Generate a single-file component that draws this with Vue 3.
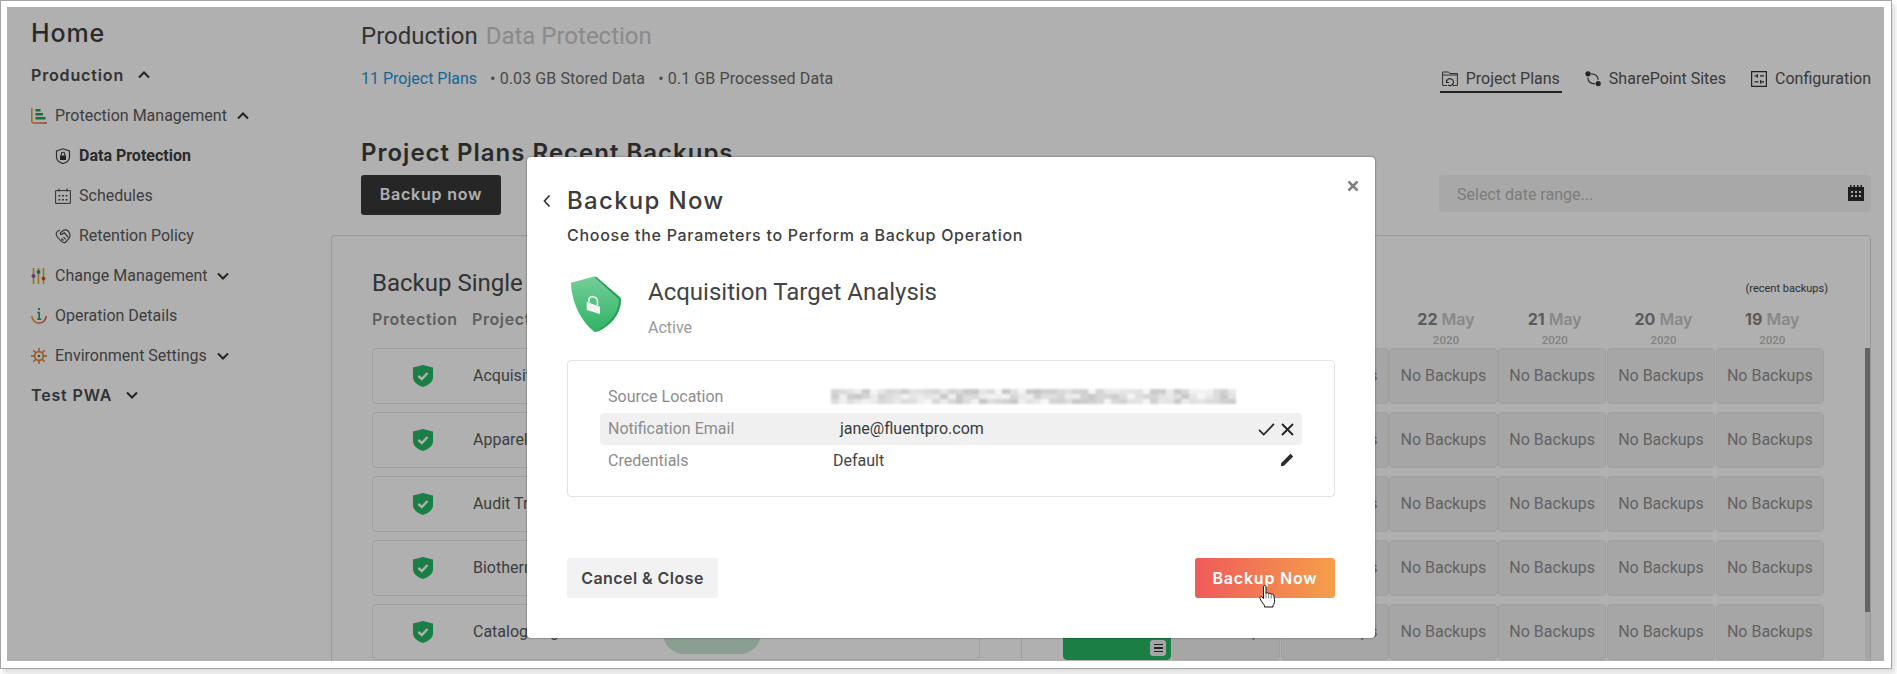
<script setup>
const dates = [['25', '2020'], ['24', '2020'], ['23', '2020'], ['22', '2020'], ['21', '2020'], ['20', '2020'], ['19', '2020']]
const rows = ['Acquisition Target Analysis', 'Apparel Redesign', 'Audit Trail Review', 'Biotherm Rollout', 'Catalog Migration']
const cells = [0, 1, 2, 3, 4, 5, 6]
const pixels = []
let seed = 7
for (let i = 0; i < 156; i++) {
  seed = (seed * 137 + 59) % 251
  const g = 198 + (seed % 50)
  pixels.push(`rgb(${g},${g},${g})`)
}
</script>

<template>
  <div class="shot">
    <div class="frame">
      <div class="stage">
        <aside class="side">
          <div class="home">Home</div>
          <div class="item group">Production
            <svg class="chev first" viewBox="0 0 12 8"><path d="M1 6.500 6 1.500l5 5" /></svg>
          </div>
          <div class="item">
            <svg class="ico" viewBox="0 0 16 16">
              <defs><linearGradient id="ax" x1="0" x2="1" y1="0" y2="0"><stop offset="0" stop-color="#e0a030" /><stop offset="1" stop-color="#e04a3c" /></linearGradient></defs>
              <path d="M.8 0v13q0 2 2 2H16" fill="none" stroke="url(#ax)" stroke-width="1.500" />
              <path d="M4.500 1h5v2.400h-5zM4.500 5h7.500v2.400H4.500zM4.500 9h10v2.400h-10z" fill="#25a05c" />
            </svg>
            <span>Protection Management</span>
            <svg class="chev" viewBox="0 0 12 8"><path d="M1 6.500 6 1.500l5 5" /></svg>
          </div>
          <div class="item sub active">
            <svg class="ico" viewBox="0 0 16 16">
              <path d="M8 .8 14.500 3v6c0 3.400-3 5.600-6.500 6.600C4.500 14.600 1.500 12.400 1.500 9V3z" fill="none" stroke="#444" stroke-width="1.200" />
              <path d="M5 7.500h6V12H5z" fill="#333" />
              <path d="M6.300 7.500V6a1.700 1.700 0 0 1 3.400 0v1.500" fill="none" stroke="#333" stroke-width="1.100" />
            </svg>
            <span>Data Protection</span>
          </div>
          <div class="item sub">
            <svg class="ico" viewBox="0 0 16 16">
              <path d="M.6 2.600h14.800v12.800H.6zM4 .5v3M12 .5v3" fill="none" stroke="#444" stroke-width="1" />
              <path d="M3.500 7h1.800v1.600H3.500zM7.100 7h1.800v1.600H7.100zM10.700 7h1.800v1.600h-1.800zM3.500 11h1.800v1.600H3.500zM7.100 11h1.800v1.600H7.100zM10.700 11h1.800v1.600h-1.800z" fill="#444" />
            </svg>
            <span>Schedules</span>
          </div>
          <div class="item sub">
            <svg class="ico" viewBox="0 0 16 16">
              <path d="M5 2.200C3 2.800 1 4.400 1.200 6.500c.2 1.600 3 4.800 6.300 7.600 1.300 1 2.500.6 3.200-.1l3-3.300c1.300-1.800 1.500-4.300.5-6.300C13 2.200 10.500 1.200 8.500 2.300L5.500 5c-.8 1 .4 2 1.500 1.300l2.400-1.500 3.800 4.600M6.500 10.500l2 2M8.500 9l2.200 2.400" fill="none" stroke="#444" stroke-width="1.100" />
            </svg>
            <span>Retention Policy</span>
          </div>
          <div class="item">
            <svg class="ico" viewBox="0 0 16 16">
              <path d="M2.500 0v16M7.500 0v16M12.500 0v16" stroke="#d8a72e" stroke-width="1.600" />
              <circle cx="2.500" cy="8" r="2" fill="#9a4dc4" /><circle cx="7.500" cy="4" r="2" fill="#25a05c" /><circle cx="12.500" cy="10.500" r="2" fill="#e04a3c" />
            </svg>
            <span>Change Management</span>
            <svg class="chev" viewBox="0 0 12 8"><path d="M1 1.500l5 5 5-5" /></svg>
          </div>
          <div class="item">
            <svg class="ico" viewBox="0 0 16 16">
              <defs><linearGradient id="ar" x1="0" x2="1" y1="0" y2="0"><stop offset="0" stop-color="#e0a030" /><stop offset="1" stop-color="#e04a3c" /></linearGradient></defs>
              <path d="M.8 8a7.200 7.200 0 0 0 14.400 0" fill="none" stroke="url(#ar)" stroke-width="1.500" />
              <path d="M7 0h2v2H7zM6.300 3.800H9v6.800h1.300V12H6.300v-1.400h1V5.200h-1z" fill="#25a05c" />
            </svg>
            <span>Operation Details</span>
          </div>
          <div class="item">
            <svg class="ico" viewBox="0 0 16 16">
              <circle cx="8" cy="8" r="4.300" fill="none" stroke="#e08a30" stroke-width="1.800" />
              <circle cx="8" cy="8" r="1.300" fill="#2a8f5a" />
              <path d="M8 0v3M8 13v3M0 8h3M13 8h3M2.300 2.300l2.200 2.200M11.500 11.500l2.200 2.200M13.700 2.300l-2.200 2.200M4.500 11.500l-2.200 2.200" stroke="#e0702c" stroke-width="1.400" />
            </svg>
            <span>Environment Settings</span>
            <svg class="chev" viewBox="0 0 12 8"><path d="M1 1.500l5 5 5-5" /></svg>
          </div>
          <div class="item group">Test PWA
            <svg class="chev first" viewBox="0 0 12 8"><path d="M1 1.500l5 5 5-5" /></svg>
          </div>
        </aside>

        <main class="main">
          <div class="head">
            <h1 class="crumb">Production <span>Data Protection</span></h1>
            <div class="stats">
              <a class="link">11 Project Plans</a>
              <span class="stat">• 0.03 GB Stored Data</span>
              <span class="stat">• 0.1 GB Processed Data</span>
              <nav class="tabs">
                <div class="tab on">
                  <svg class="ico" viewBox="0 0 16 16">
                    <path d="M.6 14.500V1h6l1.200 1.500h7.600v12H11M5 14.500H.6M.6 4h14.800" fill="none" stroke="#444" stroke-width="1" />
                    <path d="M4.500 11a3.500 3.500 0 1 1 1.500 3M4.500 8.800V11.500H7" fill="none" stroke="#333" stroke-width="1.100" />
                  </svg>
                  <span>Project Plans</span>
                </div>
                <div class="tab">
                  <svg class="ico" viewBox="0 0 16 16">
                    <circle cx="3" cy="2.800" r="2.600" fill="#333" /><circle cx="13.200" cy="12.600" r="2.600" fill="#333" />
                    <path d="M6 2.800c4.500 0 7 1.700 7.200 6M2.800 6.500c.2 4 3 6.300 7.200 6.300" fill="none" stroke="#444" stroke-width="1.200" />
                  </svg>
                  <span>SharePoint Sites</span>
                </div>
                <div class="tab">
                  <svg class="ico" viewBox="0 0 16 16">
                    <path d="M.6.6h14.800v14.800H.6z" fill="none" stroke="#333" stroke-width="1.200" />
                    <path d="M3.500 4.800h2M9 4.800h4M3.500 10.800h4M10.500 10.800h2.500" stroke="#333" stroke-width="1.200" />
                    <path d="M5.500 3.200h1.500v3.200H5.500zM9 9.200h1.500v3.200H9z" fill="#333" />
                  </svg>
                  <span>Configuration</span>
                </div>
              </nav>
            </div>
            <h2 class="section">Project Plans Recent Backups</h2>
            <div class="toolbar">
              <button class="now">Backup now</button>
              <div class="range">
                <span class="ph">Select date range...</span>
                <svg class="cal" viewBox="0 0 16 16">
                  <path fill-rule="evenodd" d="M0 2h2V0h1.500v2h2V0H7v2h2V0h1.500v2h2V0H14v2h2v14H0zM3 6v2h2V6zM7 6v2h2V6zM11 6v2h2V6zM3 10v2h2v-2zM7 10v2h2v-2zM11 10v2h2v-2z" fill="#2a2a2a" />
                </svg>
              </div>
            </div>
          </div>

          <section class="card">
            <div class="cardtop">
              <h3>Backup Single Project Plans</h3>
              <small>(recent backups)</small>
            </div>
            <div class="cols">
              <div class="hleft"><b class="hprot">Protection</b><b>Project Plan</b></div>
              <div class="hdates">
                <div v-for="d in dates" :key="d[0]" class="hdate">
                  <div class="dm"><b>{{ d[0] }}</b> May</div>
                  <div class="yr">{{ d[1] }}</div>
                </div>
              </div>
            </div>
            <div class="tbody">
              <div class="rows">
                <div v-for="name in rows" :key="name" class="row">
                  <div class="rowcard">
                    <svg class="rshield" viewBox="0 0 20 22">
                      <path d="M10 0 20 2.500V12c0 5-4.500 8.200-10 10C4.500 20.200 0 17 0 12V2.500z" fill="#28b865" />
                      <path d="M5.500 11 8.800 14l5.700-6" fill="none" stroke="#fff" stroke-width="2.400" />
                    </svg>
                    <span class="rname">{{ name }}</span>
                    <span class="pill"></span>
                  </div>
                  <div class="divider"></div>
                  <div class="rcells">
                    <div v-for="c in cells" :key="c" class="cell" :class="{ ok: c === 0 && name === rows[4] }">
                      <template v-if="c === 0 && name === rows[4]">
                        <span class="menu"><i></i><i></i><i></i></span>
                      </template>
                      <span v-else class="ctext">No Backups</span>
                    </div>
                  </div>
                </div>
              </div>
              <div class="scroll"><div class="thumb"></div></div>
            </div>
          </section>
        </main>

        <div class="overlay">
          <div class="modal">
            <header class="mhead">
              <svg class="back" viewBox="0 0 8 14"><path d="M6.500 1.500 1.500 7l5 5.500" /></svg>
              <h2>Backup Now</h2>
              <svg class="close" viewBox="0 0 12 12"><path d="M1.500 1.500l9 9M10.500 1.500l-9 9" /></svg>
            </header>
            <p class="msub">Choose the Parameters to Perform a Backup Operation</p>
            <div class="plan">
              <svg class="bigshield" viewBox="0 0 51 56">
                <defs><linearGradient id="sg" x1="0" x2="0" y1="0" y2="1"><stop offset="0" stop-color="#74cf98" /><stop offset="1" stop-color="#2fb264" /></linearGradient></defs>
                <path d="M1 8Q0 7 2 6.500L24 .5Q25.500 0 27 1.500L50 21Q51 22 51 24C51 40 38 52 26 56Q25 56.500 24 55.500C12 46 2 28 1 8Z" fill="url(#sg)" />
                <path d="M26 .8 50 21.500Q50.800 22.500 50.800 24C50.800 38 40 50 27 55.500C38 48 48.500 38 49 25Q49 23.500 48 22.500L25 1.500Z" fill="#279c58" />
                <path d="M16.700 25.700 30 30.700V38L16.700 34Z" fill="#f4f4f4" />
                <path d="M19 26.500V23.500C19 19 27.500 20 27.500 25.500V29.500" fill="none" stroke="#f4f4f4" stroke-width="1.600" />
              </svg>
              <div class="plantext">
                <div class="pname">Acquisition Target Analysis</div>
                <div class="pstate">Active</div>
              </div>
            </div>
            <div class="params">
              <div class="param">
                <span class="plabel">Source Location</span>
                <div class="blur"><i v-for="(p, i) in pixels" :key="i" :style="{ background: p }"></i></div>
              </div>
              <div class="param edit">
                <span class="plabel">Notification Email</span>
                <span class="pval mail">jane@fluentpro.com</span>
                <svg class="act" viewBox="0 0 18 14"><path d="M1 7.500 6 12.500 17 1" /></svg>
                <svg class="act x" viewBox="0 0 13 13"><path d="M1 1l11 11M12 1 1 12" /></svg>
              </div>
              <div class="param">
                <span class="plabel">Credentials</span>
                <span class="pval">Default</span>
                <svg class="pen" viewBox="0 0 14 14"><path d="M10.500.8 13.200 3.500 4 12.700.8 13.200 1.300 10Z" fill="#2d2d2d" /></svg>
              </div>
            </div>
            <footer class="mfoot">
              <button class="cancel">Cancel &amp; Close</button>
              <button class="go">Backup Now</button>
              <svg class="hand" viewBox="0 0 18 23">
                <path d="M4.500 1.500C4.500.2 7 .2 7 1.500V8.500C7.300 7.400 9.500 7.400 9.700 8.800 10 7.900 12 8 12.200 9.400 12.700 8.600 14.500 8.900 14.700 10.300L15.500 14.500C16 17 15 19 14 20.500V22H5.500V20.500C4 18.500 1.500 15 1 13.500.5 12 2 11 3.200 12L4.500 13.500Z" fill="#fff" stroke="#111" stroke-width="1" />
                <path d="M7 9v4.500M9.700 9v4.500M12.200 9.600v4" stroke="#555" stroke-width=".8" fill="none" />
              </svg>
            </footer>
          </div>
        </div>
      </div>
    </div>
  </div>
</template>

<style>
html, body { margin: 0; background: #fff; overflow: hidden; }
</style>

<style scoped>
* { box-sizing: border-box; }
.shot { width: 1897px; height: 674px; background: #fff; font-family: Roboto, sans-serif; font-size: 16px; color: #5a5a5a; overflow: hidden; }
.frame { width: 1892px; height: 669px; border: 1px solid #a4a4a4; padding: 6px 7px 6px 6px; background: #fff; box-shadow: 3px 4px 5px rgba(0,0,0,.14); }
.stage { position: relative; width: 1877px; height: 654px; display: flex; overflow: hidden; background: #fff; }
.side { width: 324px; flex: none; padding-left: 24px; }
.home { height: 49px; line-height: 52px; font-family: Inter, sans-serif; font-size: 25px; font-weight: 500; color: #3e3e3e; letter-spacing: .9px; }
.item { height: 40px; display: flex; align-items: center; gap: 8px; line-height: 24px; white-space: nowrap; }
.group { font-family: Inter, sans-serif; font-weight: 600; font-size: 16px; color: #4a4a4a; letter-spacing: .85px; gap: 0; padding-bottom: 2px; }
.sub { padding-left: 24px; }
.active { font-weight: 700; color: #3e3e3e; }
.ico { width: 16px; height: 16px; flex: none; }
.chev { width: 12px; height: 8px; margin-left: 2px; fill: none; stroke: #333; stroke-width: 2; flex: none; }
.chev.first { margin-left: 14px; }

.main { flex: 1; min-width: 0; padding: 11px 13px 0 0; display: flex; flex-direction: column; }
.head { padding-left: 30px; }
.crumb { margin: 0; font-size: 24px; line-height: 36px; font-weight: 400; color: #4a4a4a; }
.crumb span { color: #c8c8c8; margin-left: 2px; }
.stats { margin-top: 13px; height: 26px; display: flex; align-items: flex-start; line-height: 24px; gap: 13px; }
.link { color: #2196d8; }
.stat { color: #6a6a6a; letter-spacing: .1px; }
.tabs { margin-left: auto; display: flex; gap: 21px; margin-right: -2px; }
.tab { display: flex; gap: 8px; height: 26px; padding: 0 2px; color: #555; align-items: flex-start; }
.tab .ico { margin-top: 4px; }
.tab.on { border-bottom: 2px solid #333; }
.section { margin: 44px 0 0; font-family: Inter, sans-serif; font-size: 24px; line-height: 32px; font-weight: 600; color: #3e3e3e; letter-spacing: 1px; white-space: nowrap; }
.toolbar { margin-top: 6px; height: 40px; display: flex; justify-content: space-between; }
.now { width: 140px; height: 40px; border: 0; border-radius: 3px; background: #373737; color: #fff; font-family: Inter, sans-serif; font-weight: 600; font-size: 16px; letter-spacing: .8px; padding: 0 0 2px; }
.range { width: 432px; height: 37px; border-radius: 4px; background: #f3f3f3; color: #b5b5b5; padding: 0 7px 0 18px; display: flex; justify-content: space-between; align-items: center; }
.ph { padding-top: 2px; }
.cal { width: 16px; height: 16px; margin-top: -2px; }

.card { margin-top: 20px; flex: 1; border: 1px solid #dcdcdc; border-bottom: 0; border-radius: 4px 4px 0 0; padding: 31px 0 0 40px; min-height: 0; overflow: hidden; }
.cardtop { height: 33px; display: flex; justify-content: space-between; align-items: flex-end; }
.cardtop h3 { margin: 0; font-size: 24px; line-height: 33px; font-weight: 400; color: #4a4a4a; }
.cardtop small { font-size: 11px; color: #444; margin-right: 42px; line-height: 16px; padding-bottom: 3px; }
.cols { height: 48px; display: flex; }
.hleft { width: 693.500px; flex: none; display: flex; padding-top: 9px; font-family: Inter, sans-serif; color: #8a8a8a; font-size: 16px; letter-spacing: .6px; line-height: 20px; }
.hleft b { font-weight: 600; white-space: nowrap; }
.hprot { width: 100px; flex: none; }
.hdates { display: flex; gap: .6px; }
.hdate { width: 108.200px; text-align: center; }
.dm { font-family: Inter, sans-serif; font-weight: 600; font-size: 16px; line-height: 20px; padding-top: 9px; color: #c6c6c6; white-space: nowrap; }
.dm b { color: #858585; font-weight: 700; }
.yr { font-size: 11.500px; line-height: 14px; padding-top: 4px; font-weight: 500; color: #bdbdbd; }
.tbody { display: flex; }
.rows { width: 1453px; flex: none; display: flex; flex-direction: column; gap: 8px; }
.row { height: 56px; display: flex; flex: none; }
.rowcard { width: 608px; height: 56px; border: 1px solid #e8e8e8; border-radius: 4px; display: flex; align-items: center; position: relative; flex: none; }
.rshield { width: 20px; height: 22px; margin-left: 40px; flex: none; }
.rname { margin-left: 40px; color: #5a5a5a; white-space: nowrap; padding-bottom: 2px; }
.pill { width: 98px; height: 42px; border-radius: 21px; background: #c8e6d2; position: absolute; left: 290px; top: 7px; }
.divider { width: 42px; height: 56px; border-right: 1px solid #e8e8e8; flex: none; }
.rcells { margin-left: 41px; display: flex; gap: .6px; }
.cell { width: 108.200px; height: 56px; background: #f1f1f1; border: 1px solid #e6e6e6; border-radius: 4px; color: #8f8f8f; display: flex; align-items: center; justify-content: center; white-space: nowrap; position: relative; }
.ctext { padding-bottom: 2px; }
.cell.ok { background: #28b865; border-color: #28b865; }
.menu { position: absolute; right: 4px; bottom: 3px; width: 16px; height: 16px; background: #f0f0f0; border-radius: 3px; display: flex; flex-direction: column; gap: 2px; align-items: center; justify-content: center; }
.menu i { width: 9px; height: 1.500px; background: #333; display: block; }
.scroll { width: 5px; margin-left: 40px; height: 320px; background: #f1f1f1; flex: none; }
.thumb { height: 264px; background: #909090; }

.overlay { position: absolute; inset: 0; background: rgba(0, 0, 0, .31); }
.modal { position: absolute; left: 520px; top: 150px; width: 848px; height: 481px; background: #fff; border-radius: 4px; padding: 28px 40px 0 40px; box-shadow: 0 0 2px rgba(0,0,0,.6); }
.mhead { position: relative; height: 32px; }
.mhead h2 { margin: 0; font-family: Inter, sans-serif; font-size: 24px; line-height: 32px; font-weight: 500; color: #3c3c3c; letter-spacing: 1.300px; }
.back { position: absolute; left: -24px; top: 9px; width: 8px; height: 14px; fill: none; stroke: #333; stroke-width: 1.700; }
.close { position: absolute; right: -24px; top: -5px; width: 12px; height: 12px; fill: none; stroke: #808080; stroke-width: 2.500; }
.msub { margin: 6px 0 0; font-family: Inter, sans-serif; font-size: 16px; line-height: 24px; font-weight: 500; color: #404040; letter-spacing: .72px; white-space: nowrap; }
.plan { margin-top: 29px; display: flex; padding-left: 3px; }
.bigshield { width: 51px; height: 56px; flex: none; }
.plantext { margin-left: 27px; }
.pname { font-size: 24px; line-height: 32px; color: #444; white-space: nowrap; }
.pstate { margin-top: 8px; font-size: 16px; line-height: 24px; color: #999; }
.params { margin-top: 20px; height: 137px; border: 1px solid #e2e2e8; border-radius: 4px; padding: 20px 32px; }
.param { height: 32px; display: flex; align-items: center; padding: 0 8px; border-radius: 4px; position: relative; }
.param.edit { background: #f0f0f0; }
.plabel { width: 225px; flex: none; color: #8c8c8c; padding-bottom: 2px; }
.pval { color: #444; flex: none; margin-right: auto; padding-bottom: 2px; }
.mail { padding-left: 7px; color: #3a3a3a; }
.blur { width: 405px; height: 15px; margin-left: -2px; margin-top: -2px; display: grid; grid-template-columns: repeat(52, 1fr); grid-auto-rows: 5px; filter: blur(1px); }
.blur i { display: block; }
.act { width: 17px; height: 13px; fill: none; stroke: #222; stroke-width: 1.800; margin-right: 6px; }
.act.x { width: 13px; height: 13px; margin-right: 0; }
.pen { width: 14px; height: 14px; margin-top: -3px; }
.mfoot { margin-top: 61px; display: flex; justify-content: space-between; position: relative; }
.mfoot button { height: 40px; border: 0; border-radius: 3px; font-family: Inter, sans-serif; font-weight: 600; font-size: 16px; padding: 0; }
.cancel { width: 151px; background: #f2f2f2; color: #444; letter-spacing: .45px; }
.go { width: 140px; background: linear-gradient(90deg, #ee5b5b, #f59f4a); color: #fff; letter-spacing: .8px; }
.hand { position: absolute; left: 692px; top: 27px; width: 18px; height: 23px; }
</style>
